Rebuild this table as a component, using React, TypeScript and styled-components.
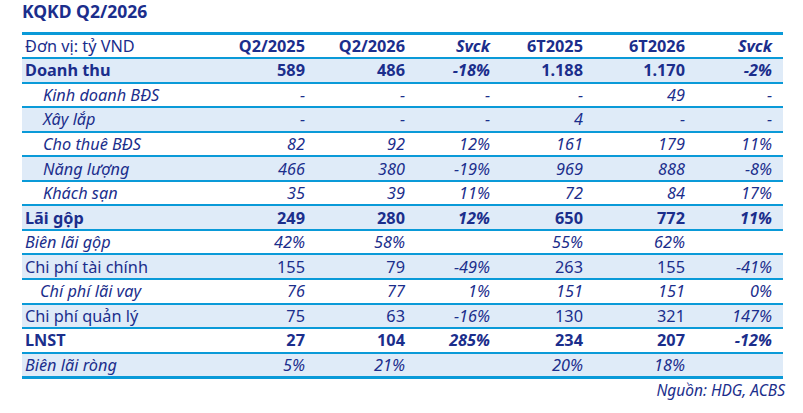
import React from 'react';
import styled, { createGlobalStyle } from 'styled-components';

const GlobalStyle = createGlobalStyle`
  html, body {
    margin: 0;
    padding: 0;
    background: #ffffff;
  }
  body {
    font-family: 'Noto Sans', 'Liberation Sans', sans-serif;
    color: #1b2e8c;
  }
`;

const Page = styled.div`
  width: 803px;
  height: 413px;
  padding: 1px 20px 0 22px;
  box-sizing: border-box;
`;

const Title = styled.h1`
  margin: 0;
  height: 31px;
  font-size: 17.5px;
  font-weight: 700;
  line-height: 20px;
  color: #1b2e8c;
`;

const Table = styled.table`
  width: 761px;
  border-collapse: collapse;
  table-layout: fixed;
  border-top: 3px solid #0a9ad8;
  border-bottom: 3px solid #0a9ad8;
`;

const Col = styled.col<{ $w: number }>`
  width: ${({ $w }) => $w}px;
`;

type Kind = 'total' | 'sub' | 'ratio' | 'plain' | 'header';

const Row = styled.tr<{ $shaded: boolean }>`
  height: 24.55px;
  background: ${({ $shaded }) => ($shaded ? '#dfebf8' : '#ffffff')};
  border-bottom: 2.5px solid #0a9ad8;
`;

const LabelCell = styled.td<{ $kind: Kind; $indent?: number }>`
  padding: 0 0 0 ${({ $indent }) => $indent ?? 3}px;
  font-size: 16.3px;
  line-height: 20px;
  white-space: nowrap;
  font-weight: ${({ $kind }) => ($kind === 'total' ? 700 : 400)};
  font-style: ${({ $kind }) => ($kind === 'sub' || $kind === 'ratio' ? 'italic' : 'normal')};
`;

const ValueCell = styled.td<{ $bold: boolean; $italic: boolean }>`
  padding: 0 11px 0 0;
  text-align: right;
  font-size: 16.3px;
  line-height: 20px;
  white-space: nowrap;
  font-weight: ${({ $bold }) => ($bold ? 700 : 400)};
  font-style: ${({ $italic }) => ($italic ? 'italic' : 'normal')};
`;

const Source = styled.div`
  width: 763px;
  text-align: right;
  font-size: 15.5px;
  font-style: italic;
  line-height: 20px;
  margin-top: 1px;
`;

interface Line {
  label: string;
  kind: Kind;
  indent?: number;
  values: string[];
}

const widths = [194, 100, 100, 85, 93, 102, 87];

const header = ['Q2/2025', 'Q2/2026', 'Svck', '6T2025', '6T2026', 'Svck'];

const lines: Line[] = [
  { label: 'Doanh thu', kind: 'total', values: ['589', '486', '-18%', '1.188', '1.170', '-2%'] },
  { label: 'Kinh doanh BĐS', kind: 'sub', indent: 21, values: ['-', '-', '-', '-', '49', '-'] },
  { label: 'Xây lắp', kind: 'sub', indent: 21, values: ['-', '-', '-', '4', '-', '-'] },
  { label: 'Cho thuê BĐS', kind: 'sub', indent: 21, values: ['82', '92', '12%', '161', '179', '11%'] },
  { label: 'Năng lượng', kind: 'sub', indent: 21, values: ['466', '380', '-19%', '969', '888', '-8%'] },
  { label: 'Khách sạn', kind: 'sub', indent: 21, values: ['35', '39', '11%', '72', '84', '17%'] },
  { label: 'Lãi gộp', kind: 'total', values: ['249', '280', '12%', '650', '772', '11%'] },
  { label: 'Biên lãi gộp', kind: 'ratio', values: ['42%', '58%', '', '55%', '62%', ''] },
  { label: 'Chi phí tài chính', kind: 'plain', values: ['155', '79', '-49%', '263', '155', '-41%'] },
  { label: 'Chí phí lãi vay', kind: 'sub', indent: 18, values: ['76', '77', '1%', '151', '151', '0%'] },
  { label: 'Chi phí quản lý', kind: 'plain', values: ['75', '63', '-16%', '130', '321', '147%'] },
  { label: 'LNST', kind: 'total', values: ['27', '104', '285%', '234', '207', '-12%'] },
  { label: 'Biên lãi ròng', kind: 'ratio', values: ['5%', '21%', '', '20%', '18%', ''] },
];

const isSvck = (i: number) => i === 2 || i === 5;

export default function App() {
  return (
    <>
      <GlobalStyle />
      <Page>
        <Title>KQKD Q2/2026</Title>
        <Table>
          <colgroup>
            {widths.map((w, i) => (
              <Col key={i} $w={w} />
            ))}
          </colgroup>
          <tbody>
            <Row $shaded={false}>
              <LabelCell $kind="header">Đơn vị: tỷ VND</LabelCell>
              {header.map((h, i) => (
                <ValueCell key={i} $bold $italic={isSvck(i)}>
                  {h}
                </ValueCell>
              ))}
            </Row>
            {lines.map((line, r) => (
              <Row key={line.label} $shaded={r % 2 === 0}>
                <LabelCell $kind={line.kind} $indent={line.indent}>
                  {line.label}
                </LabelCell>
                {line.values.map((v, i) => (
                  <ValueCell
                    key={i}
                    $bold={line.kind === 'total'}
                    $italic={isSvck(i) || line.kind === 'sub' || line.kind === 'ratio'}
                  >
                    {v}
                  </ValueCell>
                ))}
              </Row>
            ))}
          </tbody>
        </Table>
        <Source>Nguồn: HDG, ACBS</Source>
      </Page>
    </>
  );
}
